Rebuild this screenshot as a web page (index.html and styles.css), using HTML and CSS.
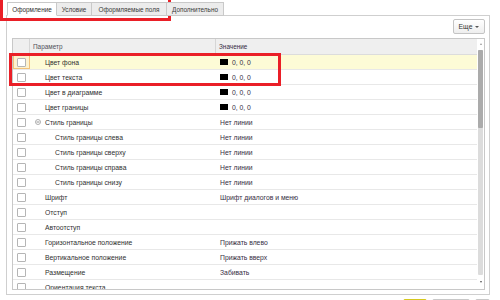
FILE: index.html
```html
<!DOCTYPE html>
<html lang="ru">
<head>
<meta charset="utf-8">
<link rel="stylesheet" href="styles.css">
</head>
<body>
<div class="screen">
  <div class="tabs">
    <div class="tab tab-active w1">Оформление</div>
    <div class="tab w2">Условие</div>
    <div class="tab w3">Оформляемые поля</div>
    <div class="tab w4">Дополнительно</div>
  </div>
  <div class="panel">
    <div class="toolbar">
      <div class="btn-more">Еще <span class="caret"></span></div>
    </div>
    <div class="table">
      <div class="table-main">
        <div class="thead">
          <div class="c-check"></div>
          <div class="c-name">Параметр</div>
          <div class="c-val">Значение</div>
        </div>
        <div class="tbody">
          <div class="row row-sel"><div class="c-check focus"><span class="cb"></span></div><div class="c-name">Цвет фона</div><div class="c-val"><span class="sw"></span>0, 0, 0</div></div>
          <div class="row"><div class="c-check"><span class="cb"></span></div><div class="c-name">Цвет текста</div><div class="c-val"><span class="sw"></span>0, 0, 0</div></div>
          <div class="row"><div class="c-check"><span class="cb"></span></div><div class="c-name">Цвет в диаграмме</div><div class="c-val"><span class="sw"></span>0, 0, 0</div></div>
          <div class="row"><div class="c-check"><span class="cb"></span></div><div class="c-name">Цвет границы</div><div class="c-val"><span class="sw"></span>0, 0, 0</div></div>
          <div class="row"><div class="c-check"><span class="cb"></span></div><div class="c-name"><svg class="tog" width="6" height="6" viewBox="0 0 6 6"><circle cx="3" cy="3" r="2.5" fill="#fff" stroke="#9a9a9a" stroke-width="0.8"/><line x1="1.6" y1="3" x2="4.4" y2="3" stroke="#777" stroke-width="0.8"/></svg>Стиль границы</div><div class="c-val">Нет линии</div></div>
          <div class="row"><div class="c-check"><span class="cb"></span></div><div class="c-name sub">Стиль границы слева</div><div class="c-val">Нет линии</div></div>
          <div class="row"><div class="c-check"><span class="cb"></span></div><div class="c-name sub">Стиль границы сверху</div><div class="c-val">Нет линии</div></div>
          <div class="row"><div class="c-check"><span class="cb"></span></div><div class="c-name sub">Стиль границы справа</div><div class="c-val">Нет линии</div></div>
          <div class="row"><div class="c-check"><span class="cb"></span></div><div class="c-name sub">Стиль границы снизу</div><div class="c-val">Нет линии</div></div>
          <div class="row"><div class="c-check"><span class="cb"></span></div><div class="c-name">Шрифт</div><div class="c-val">Шрифт диалогов и меню</div></div>
          <div class="row"><div class="c-check"><span class="cb"></span></div><div class="c-name">Отступ</div><div class="c-val"></div></div>
          <div class="row"><div class="c-check"><span class="cb"></span></div><div class="c-name">Автоотступ</div><div class="c-val"></div></div>
          <div class="row"><div class="c-check"><span class="cb"></span></div><div class="c-name">Горизонтальное положение</div><div class="c-val">Прижать влево</div></div>
          <div class="row"><div class="c-check"><span class="cb"></span></div><div class="c-name">Вертикальное положение</div><div class="c-val">Прижать вверх</div></div>
          <div class="row"><div class="c-check"><span class="cb"></span></div><div class="c-name">Размещение</div><div class="c-val">Забивать</div></div>
          <div class="row"><div class="c-check"><span class="cb"></span></div><div class="c-name">Ориентация текста</div><div class="c-val"></div></div>
        </div>
      </div>
      <div class="vscroll">
        <div class="arrow up"></div>
        <div class="track"><div class="thumb"></div></div>
        <div class="arrow down"></div>
      </div>
    </div>
  </div>
  <div class="footer">
    <div class="fbtn fbtn-ok"></div>
    <div class="fbtn fbtn-2"></div>
    <div class="fbtn fbtn-3"></div>
  </div>
  <div class="mark mark-tabs"></div>
  <div class="mark mark-rows"></div>
</div>
</body>
</html>
```
FILE: styles.css
```css
* { box-sizing: border-box; }
html, body { margin: 0; padding: 0; background: #fff; }
body {
  width: 500px;
  height: 300px;
  overflow: hidden;
  font-family: "Liberation Sans", Arial, sans-serif;
  font-size: 6.4px;
  color: #2f2f2f;
}
.screen { position: relative; width: 500px; height: 300px; overflow: hidden; }

.tabs {
  display: flex;
  margin-left: 7px;
  padding-top: 2px;
  height: 16px;
  position: relative;
  z-index: 1;
}
.tab {
  height: 14px;
  border: 1px solid #c9c9c9;
  border-left: none;
  background: #ececec;
  display: flex;
  align-items: center;
  justify-content: center;
  color: #3a3a3a;
}
.tab-active {
  border-left: 1px solid #c9c9c9;
  border-bottom-color: #fff;
  background: #fff;
  color: #2f2f2f;
}
.w1 { width: 50px; }
.w2 { width: 35px; }
.w3 { width: 75px; }
.w4 { width: 57px; }

.panel {
  margin-left: 6px;
  margin-top: -1px;
  width: 484px;
  height: 280px;
  border: 1px solid #cfcfcf;
  padding: 3px 4px 4px 5px;
  display: flex;
  flex-direction: column;
}
.toolbar {
  display: flex;
  justify-content: flex-end;
  height: 15px;
  margin-bottom: 4px;
}
.btn-more {
  width: 32px;
  height: 15px;
  border: 1px solid #c4c4c4;
  border-radius: 2px;
  background: linear-gradient(#ffffff, #eeeeee);
  display: flex;
  align-items: center;
  justify-content: center;
  gap: 3px;
  color: #333;
  font-size: 6.8px;
}
.caret {
  width: 0; height: 0;
  border-left: 2px solid transparent;
  border-right: 2px solid transparent;
  border-top: 2px solid #555;
}

.table {
  flex: 1;
  display: flex;
  border: 1px solid #c8c8c8;
  overflow: hidden;
  font-size: 6.8px;
}
.table-main { flex: 1; overflow: hidden; display: flex; flex-direction: column; }
.thead {
  display: flex;
  height: 16px;
  background: #efefef;
  border-bottom: 1px solid #dcdcdc;
  color: #4f4f5a;
  flex: none;
  font-size: 6.4px;
}
.thead .c-check { border-right: 1px solid #d6d6d6; }
.thead .c-name { border-right: 1px solid #d6d6d6; padding-left: 3px; }
.thead .c-val { padding-left: 3px; }
.c-check { width: 17px; flex: none; display: flex; align-items: center; justify-content: center; }
.c-name { width: 186px; flex: none; display: flex; align-items: center; padding-left: 15px; white-space: nowrap; }
.c-name.sub { padding-left: 25px; }
.c-val { flex: 1; display: flex; align-items: center; padding-left: 4px; white-space: nowrap; color: #352d42; }

.row {
  display: flex;
  height: 15px;
  border-bottom: 1px solid #e8e8e8;
  flex: none;
}
.row-sel { background: #fdfbd6; }
.c-check.focus { background: #fdf2cf; border: 1px solid #f2c27a; }
.cb {
  width: 9px; height: 9px;
  border: 1px solid #b5b5b5;
  background: #fff;
  border-radius: 1px;
}
.tog { margin-left: -10px; margin-right: 4px; }
.sw {
  width: 8px; height: 6px;
  background: #000;
  margin-right: 4px;
}

.vscroll {
  width: 7px;
  flex: none;
  display: flex;
  flex-direction: column;
  align-items: center;
  background: #fff;
}
.arrow { width: 0; height: 0; border-left: 1.5px solid transparent; border-right: 1.5px solid transparent; }
.arrow.up { border-bottom: 2px solid #999; margin-top: 4px; margin-bottom: 5px; }
.arrow.down { border-top: 2px solid #555; margin-top: 6px; margin-bottom: 6px; }
.track { flex: 1; width: 5px; background: #dcdcdc; border-radius: 1px; }
.thumb { height: 78px; background: #ababab; border-radius: 1px; }

.footer {
  display: flex;
  justify-content: flex-end;
  gap: 5px;
  margin-top: 4px;
  padding-right: 10px;
}
.fbtn { height: 12px; border: 1px solid #c8c8c8; border-radius: 2px; background: #f4f4f4; }
.fbtn-ok { width: 24px; background: #f1e74a; border-color: #d6c81e; }
.fbtn-2 { width: 38px; }
.fbtn-3 { width: 15px; }

.mark { position: absolute; border: 3px solid #ea1f27; }
.mark-tabs { left: 0; top: -6px; width: 171px; height: 27px; }
.mark-rows { left: 9px; top: 53px; width: 272px; height: 33px; }
```
